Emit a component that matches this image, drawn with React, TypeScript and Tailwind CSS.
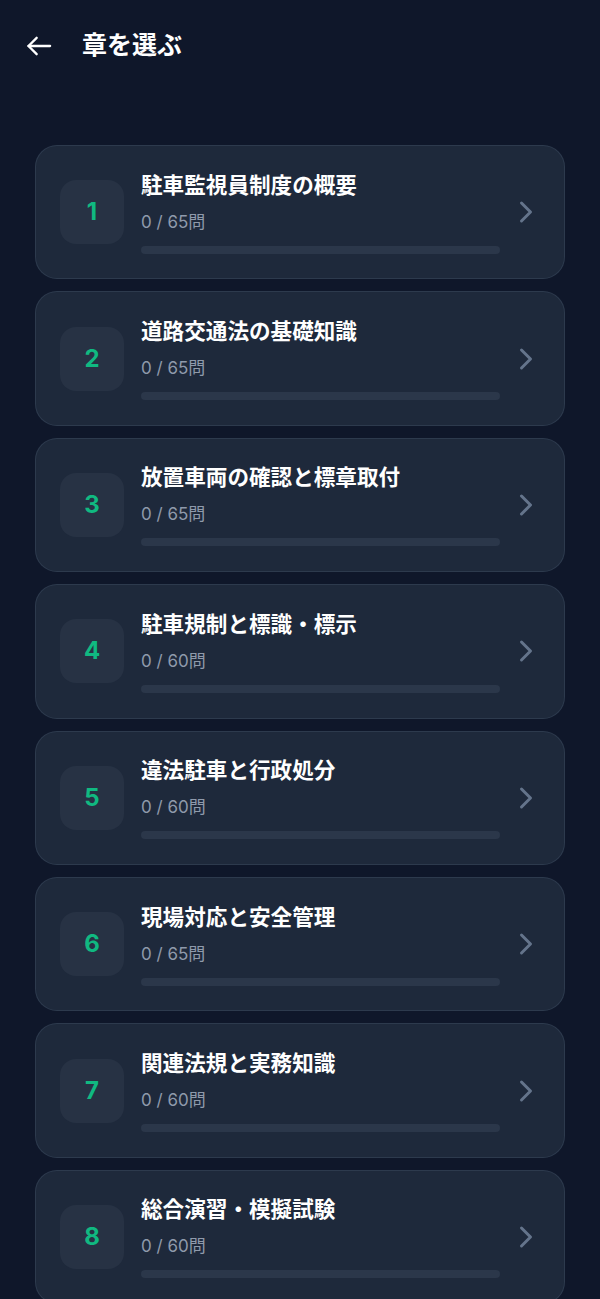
import React from 'react'
import { ChevronRight } from 'lucide-react'

const chapters = [
  { no: 1, title: '駐車監視員制度の概要', done: 0, total: 65 },
  { no: 2, title: '道路交通法の基礎知識', done: 0, total: 65 },
  { no: 3, title: '放置車両の確認と標章取付', done: 0, total: 65 },
  { no: 4, title: '駐車規制と標識・標示', done: 0, total: 60 },
  { no: 5, title: '違法駐車と行政処分', done: 0, total: 60 },
  { no: 6, title: '現場対応と安全管理', done: 0, total: 65 },
  { no: 7, title: '関連法規と実務知識', done: 0, total: 60 },
  { no: 8, title: '総合演習・模擬試験', done: 0, total: 60 },
]

function ChapterCard({ no, title, done, total }: { no: number; title: string; done: number; total: number }) {
  const pct = total ? (done / total) * 100 : 0
  return (
    <button className="flex h-[134.4px] w-full shrink-0 items-center rounded-[22px] border border-[#334155]/70 bg-[#1e293b] pl-[24px] pr-[20px] text-left">
      <div className="flex h-[64px] w-[64px] shrink-0 items-center justify-center rounded-[16px] bg-[#273244]">
        <span className="text-[24px] font-bold text-[#10b981]">{no}</span>
      </div>
      <div className="ml-[17px] flex min-w-0 flex-1 flex-col">
        <div className="text-[21.6px] font-bold leading-[28px] text-white">{title}</div>
        <div className="mt-[11px] text-[17px] leading-[24px] text-[#8f9aab]">
          {done} / {total}問
        </div>
        <div className="mt-[12px] h-[8px] w-full overflow-hidden rounded-full bg-[#2b374a]">
          <div className="h-full rounded-full bg-[#10b981]" style={{ width: `${pct}%` }} />
        </div>
      </div>
      <ChevronRight size={36} strokeWidth={2} className="ml-[8px] shrink-0 text-[#64748b]" />
    </button>
  )
}

export default function App() {
  return (
    <div
      className="min-h-[1299px] overflow-hidden bg-[#0f172a]"
      style={{ fontFamily: 'Inter, "Noto Sans CJK JP", sans-serif' }}
    >
      <header className="flex h-[92px] items-center pl-[25px]">
        <svg width="28" height="28" viewBox="0 0 24 24" fill="none" stroke="white" strokeWidth="2" strokeLinecap="round" strokeLinejoin="round">
          <path d="M21.5 12H3" />
          <path d="M10 5l-7 7 7 7" />
        </svg>
        <h1 className="ml-[29px] text-[25px] font-bold text-white">章を選ぶ</h1>
      </header>

      <div className="mt-[53px] flex flex-col gap-[12px] px-[35px]">
        {chapters.map((c) => (
          <ChapterCard key={c.no} {...c} />
        ))}
      </div>
    </div>
  )
}
